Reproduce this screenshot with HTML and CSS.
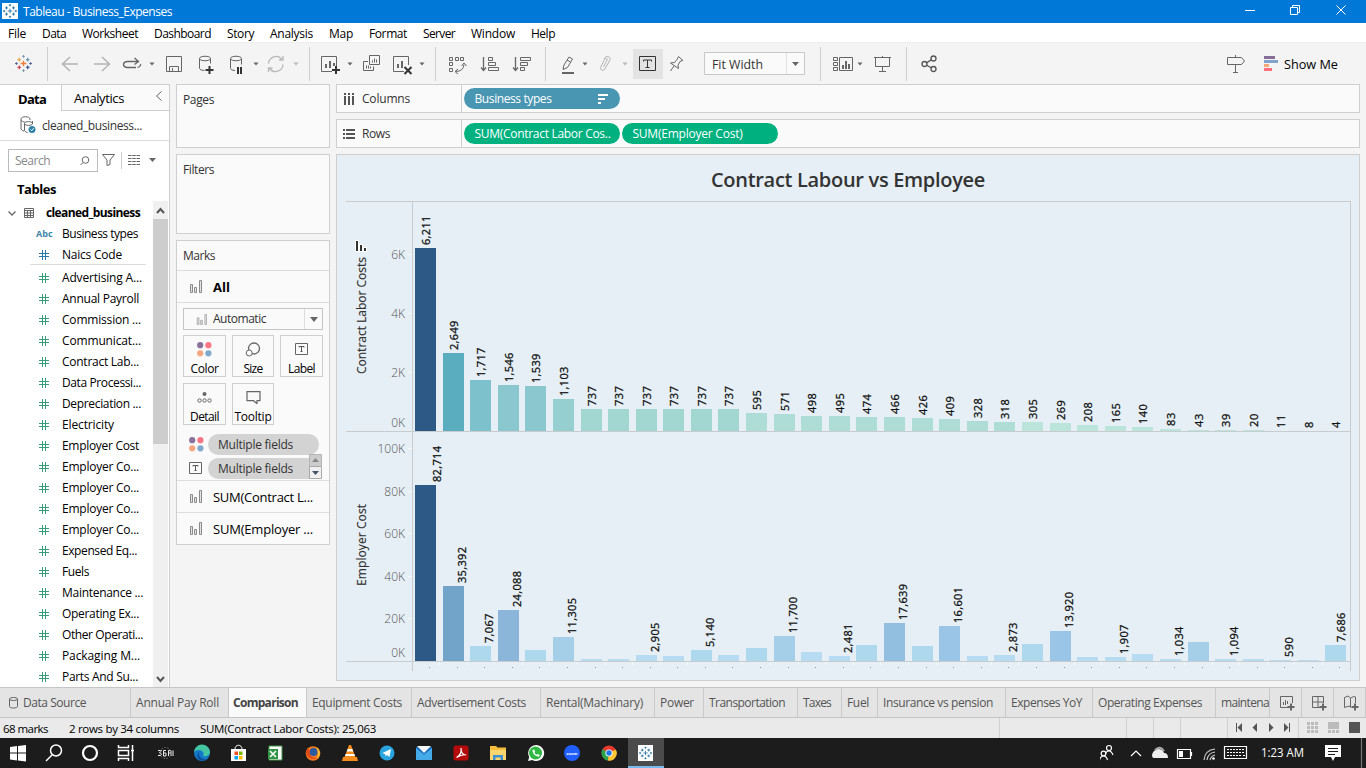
FILE: index.html
```html
<!DOCTYPE html>
<html lang="en">
<head>
<meta charset="utf-8">
<title>Tableau - Business_Expenses</title>
<link rel="stylesheet" href="styles.css">
</head>
<body>
<svg class="defs" width="0" height="0">
  <defs>
    <symbol id="tab-logo" viewBox="0 0 18 18">
      <path d="M9 6v6M6 9h6" stroke="#eb7b35" stroke-width="1.4"/>
      <path d="M4.500 3v4M2.500 5h4" stroke="#e0a33a" stroke-width="1.200"/>
      <path d="M13.500 3v4M11.500 5h4" stroke="#5b8fa8" stroke-width="1.200"/>
      <path d="M4.500 11v4M2.500 13h4" stroke="#c5323f" stroke-width="1.200"/>
      <path d="M13.500 11v4M11.500 13h4" stroke="#2f4f8f" stroke-width="1.200"/>
      <path d="M9 0v3M7.500 1.500h3M9 15v3M7.500 16.500h3" stroke="#7699a6" stroke-width="1"/>
      <path d="M1.500 7.500v3M0 9h3M16.500 7.500v3M15 9h3" stroke="#50609a" stroke-width="1"/>
    </symbol>
    <symbol id="tab-mono" viewBox="0 0 18 18">
      <path d="M9 6v6M6 9h6M4.500 3v4M2.500 5h4M13.500 3v4M11.500 5h4M4.500 11v4M2.500 13h4M13.500 11v4M11.500 13h4M9 0v3M7.500 1.500h3M9 15v3M7.500 16.500h3M1.500 7.500v3M0 9h3M16.500 7.500v3M15 9h3" stroke="#2d76a8" stroke-width="1.200"/>
    </symbol>
    <symbol id="bars" viewBox="0 0 13 13">
      <path d="M1.500 4.500h2v8h-2zM5.500 7.500h2v5h-2zM10.500.5h2v12h-2z" fill="#e4e4e4" stroke="#8a8a8a"/>
    </symbol>
    <symbol id="dots4" viewBox="0 0 15 15">
      <circle cx="3.200" cy="3.200" r="3.100" fill="#8a7199"/><circle cx="11.400" cy="3.200" r="3.100" fill="#fb7585"/>
      <circle cx="3.200" cy="11.300" r="3.100" fill="#f5a67f"/><circle cx="11.400" cy="11.300" r="3.100" fill="#80a8cc"/>
    </symbol>
    <symbol id="hash" viewBox="0 0 10 10">
      <path d="M3.500 0v10M6.500 0v10M0 3.500h10M0 6.500h10" fill="none" stroke="currentColor"/>
    </symbol>
    <symbol id="tbox" viewBox="0 0 13 12">
      <path d="M.5.5h12v11H.5z" fill="none" stroke="#666"/>
      <path d="M4 4.500v-1h5v1M6.500 3.500v5M5.500 8.500h2" fill="none" stroke="#555"/>
    </symbol>
  </defs>
</svg>

<header class="titlebar">
  <span class="app-ico"><svg width="14" height="14"><use href="#tab-mono"/></svg></span>
  <span class="app-title" data-w="149">Tableau - Business_Expenses</span>
  <svg class="win-btns" width="136" height="23" viewBox="1230 0 136 23" fill="none" stroke="#fff">
    <path d="M1245 10.500h10M1290.500 7.500h7v7h-7zM1292.500 7.500v-2h7v7h-2M1336.500 5.500l9 9M1345.500 5.500l-9 9"/>
  </svg>
</header>

<nav class="menubar">
  <span data-w="18">File</span><span data-w="24">Data</span><span data-w="56">Worksheet</span><span data-w="57">Dashboard</span><span data-w="27">Story</span><span data-w="43">Analysis</span><span data-w="24">Map</span><span data-w="38">Format</span><span data-w="32">Server</span><span data-w="44">Window</span><span data-w="24">Help</span>
</nav>

<section class="toolbar">
  <svg width="48" height="41" viewBox="0 43 48 41" class="grp"><use href="#tab-logo" x="15" y="55" width="17" height="17"/></svg>
  <svg width="262" height="41" viewBox="48 43 262 41" class="grp ln">
    <path d="M78 64H63M70 57l-7.500 7 7.500 7M94 64h15M102 57l7.500 7-7.500 7" stroke="#b4b4b4" stroke-width="1.500"/>
    <path d="M136 67.500h-9q-3.500-.5-3.500-3t3.500-3h12M134.500 58l4 3.500-4 3M137.500 67.500q3.500-1 3-3.500" stroke-width="1.300"/>
    <path class="car" d="M149.500 62.500h5l-2.500 3zM253.500 62.500h5l-2.500 3z"/><path class="car dim" d="M293.500 62.500h5l-2.500 3z"/>
    <path d="M166.500 56.500h15v15h-15zM169.500 71v-4.500h9V71M172.500 68v3"/>
    <path d="M199.500 58.500v10q.5 2 5 2M210.500 58.500v5M199.500 58.500c0-3 11-3 11 0s-11 3-11 0"/>
    <path d="M209.500 66v8M205.500 70h8" stroke="#333" stroke-width="2"/>
    <path d="M230.500 58.500v10q.5 2 4.500 2M241.500 58.500v6M230.500 58.500c0-3 11-3 11 0s-11 3-11 0"/>
    <path d="M238 67v7M241 67v7" stroke="#333" stroke-width="2"/>
    <path d="M268.500 63.500a7.500 7.500 0 0 1 13.500-4M283 64.500a7.500 7.500 0 0 1-13.500 4M283 56v4h-4M268.500 72v-4h4" stroke="#b8b8b8" stroke-width="1.300"/>
  </svg>
  <svg width="126" height="41" viewBox="310 43 126 41" class="grp ln">
    <path d="M332 71.500h-10.500v-15h15V67"/><path d="M326 68v-4M330 68v-7M334 66v-3" stroke-width="2"/>
    <path d="M336 66v8M332 70h8" stroke="#333" stroke-width="2"/>
    <path class="car" d="M347.500 62.500h5l-2.500 3zM419.500 62.500h5l-2.500 3z"/>
    <path d="M369.500 55.500h10v9h-10zM368 61.500h-4.500v9h10V66.500M372.500 62.500v-2M374.500 62.500v-4M376.500 62.500v-3M366.500 68.500v-3M368.500 68.500v-3M370.500 68.500v-2"/>
    <path d="M404 71.500h-10.500v-15h15V65"/><path d="M398 68v-4M402 68v-7" stroke-width="2"/>
    <path d="M404.500 67l7 7M411.500 67l-7 7" stroke="#333" stroke-width="2"/>
  </svg>
  <svg width="110" height="41" viewBox="436 43 110 41" class="grp ln">
    <path d="M449.500 57.500h3v3h-3zM455.500 57.500h3v3h-3zM460.500 57.500h3v3h-3zM449.500 62.500h3v3h-3zM449.500 68.500h3v3h-3zM455.500 71.500q8 0 8.500-7M458 69l-3 2.500 3 2.500M461.500 66l2.500-3 2.500 3"/>
    <path d="M483.500 57v13M481 67.500l2.500 3 2.500-3M515.500 57v13M513 67.500l2.500 3 2.500-3" stroke-width="1.300"/>
    <path d="M488.500 57.500h4v3h-4zM488.500 62.500h7v3h-7zM488.500 67.500h10v3h-10zM520.500 57.500h10v3h-10zM520.500 62.500h7v3h-7zM520.500 67.500h4v3h-4z"/>
  </svg>
  <svg width="275" height="41" viewBox="546 43 275 41" class="grp ln">
    <path d="M563 69.500l1-4.500 5-8 3.500 2-5 8.500zM567 60l3.500 2"/><path d="M562 73h12" stroke-width="2"/>
    <path class="car" d="M582.500 62.500h5l-2.500 3z"/><path class="car dim" d="M622.500 62.500h5l-2.500 3z"/>
    <path d="M603.500 67l4-8q-1-2-3 .5l-4 8q.5 4.500 4 2l5.500-9.500q.5-4-3.500-3.500-1.500.5-2.500 2.500" stroke="#b4b4b4"/>
    <path d="M633 49h30v30h-30z" fill="#e3e3e3" stroke="none"/><path d="M639.500 56.500h16v14h-16z" stroke="#333"/>
    <path d="M643.500 61.500v-1.500h8v1.500M647.500 60v7.500M645.500 67.500h4" stroke="#333"/>
    <path d="M678.500 56.500l4.500 4-2.500.5-2.500 4 .5 3.500-8-5.500 4-.5 2.500-3zM674 66l-3.500 5"/>
    <path d="M704.500 52.500h100v22h-100z" fill="#fafafa" stroke="#c8c8c8"/><path d="M786.500 53v21" stroke="#e0e0e0"/><path class="car" d="M792 62h7l-3.500 4z"/>
    <text x="712" y="69" class="tl" textLength="51" lengthAdjust="spacingAndGlyphs">Fit Width</text>
  </svg>
  <svg width="86" height="41" viewBox="821 43 86 41" class="grp ln">
    <path d="M833.500 57.500h4v3h-4zM833.500 62.500h4v3h-4zM833.500 67.500h4v3h-4zM839.500 57.500h13v13h-13z"/><path d="M843 69v-4M846 69v-8M849 69v-5" stroke-width="2"/>
    <path class="car" d="M857.500 62.500h5l-2.500 3z"/>
    <path d="M874 57.500h17M875.500 58v8.500h14V58M882.500 66.500v5M879 71.500h7M882.500 56v1.500"/>
  </svg>
  <svg width="459" height="41" viewBox="907 43 459 41" class="ln">
    <g stroke="#555" stroke-width="1.300"><circle cx="924.500" cy="64" r="2.500"/><circle cx="933.500" cy="58.500" r="2.500"/><circle cx="933.500" cy="69" r="2.500"/><path d="M926.700 62.700l4.500-2.800M926.700 65.300l4.500 2.500"/></g>
    <path d="M1227.500 57.500h14l3 3.500-3 3.500h-14zM1235.500 64.500v7.500M1233 72.500h5M1235.500 55v2.500"/>
    <g stroke="none"><path d="M1264 56h11v3h-11z" fill="#866e99"/><path d="M1264 60h14v3h-14z" fill="#7fa3cc"/><path d="M1264 64h5v3h-5z" fill="#f5a878"/><path d="M1264 68h8v3h-8z" fill="#fb6d7c"/></g>
    <text x="1284" y="69" class="tl dark" textLength="54" lengthAdjust="spacingAndGlyphs">Show Me</text>
  </svg>
</section>

<main class="work">
  <aside class="side">
    <div class="side-tabs">
      <div class="st on"><b data-w="28">Data</b></div>
      <div class="st"><span data-w="50">Analytics</span><svg width="8" height="12" class="ln"><path d="M6.500 1.500L1.500 6l5 4.500"/></svg></div>
    </div>
    <div class="source">
      <svg width="18" height="18" class="ln"><path d="M2 4v9q1 2 3 2M11 4V3C11 0 2 0 2 3s4 3 4 3M5.500 7.500v7q1 2 3 2M5.500 7.500c0-2.500 8-2.500 8 0s-8 2.500-8 0M13.500 5v3"/><circle cx="13" cy="13.500" r="3.500" fill="#2f83a9" stroke="none"/><path d="M11.500 13.500l1.200 1.200 2-2.400" stroke="#fff"/></svg>
      <span data-w="100">cleaned_business...</span>
    </div>
    <div class="search">
      <div class="box"><span data-w="35">Search</span><svg width="10" height="10" class="ln"><circle cx="5.500" cy="4" r="3.300"/><path d="M3 6.500L.5 9"/></svg></div>
      <svg width="56" height="20" viewBox="101 150 56 20" class="ln"><path d="M102.500 154.500h12l-4.500 5.500v4.500l-3 1V160z"/><path d="M121.500 152v17" stroke="#ccc"/><path d="M128 155.500h12M128 158.500h12M128 161.500h12M128 164.500h12" stroke-dasharray="3.500 .75"/><path class="car" d="M149 158h7l-3.500 4z"/></svg>
    </div>
    <div class="tables"><b data-w="39">Tables</b></div>
    <div class="list-wrap">
      <div class="list">
        <div class="f root"><svg width="27" height="10" viewBox="7 0 27 10" class="ln"><path d="M8.500 3.500l3.500 3.500 3.500-3.500" stroke-width="1.300"/><path d="M24.500.5h9v9h-9zM24.500 2.500h9M24.500 5h9M24.500 7.500h9M27.500 2v8M30.500 2v8"/></svg><b data-w="94">cleaned_business</b></div>
        <div class="f"><em>Abc</em><span data-w="76">Business types</span></div>
        <div class="f blue last"><svg><use href="#hash"/></svg><span data-w="60">Naics Code</span></div>
        <div class="f"><svg><use href="#hash"/></svg><span data-w="80">Advertising A...</span></div>
        <div class="f"><svg><use href="#hash"/></svg><span data-w="77">Annual Payroll</span></div>
        <div class="f"><svg><use href="#hash"/></svg><span data-w="79">Commission ...</span></div>
        <div class="f"><svg><use href="#hash"/></svg><span data-w="79">Communicat...</span></div>
        <div class="f"><svg><use href="#hash"/></svg><span data-w="77">Contract Lab...</span></div>
        <div class="f"><svg><use href="#hash"/></svg><span data-w="79">Data Processi...</span></div>
        <div class="f"><svg><use href="#hash"/></svg><span data-w="79">Depreciation ...</span></div>
        <div class="f"><svg><use href="#hash"/></svg><span data-w="52">Electricity</span></div>
        <div class="f"><svg><use href="#hash"/></svg><span data-w="77">Employer Cost</span></div>
        <div class="f"><svg><use href="#hash"/></svg><span data-w="77">Employer Co...</span></div>
        <div class="f"><svg><use href="#hash"/></svg><span data-w="77">Employer Co...</span></div>
        <div class="f"><svg><use href="#hash"/></svg><span data-w="77">Employer Co...</span></div>
        <div class="f"><svg><use href="#hash"/></svg><span data-w="77">Employer Co...</span></div>
        <div class="f"><svg><use href="#hash"/></svg><span data-w="75">Expensed Eq...</span></div>
        <div class="f"><svg><use href="#hash"/></svg><span data-w="27">Fuels</span></div>
        <div class="f"><svg><use href="#hash"/></svg><span data-w="81">Maintenance ...</span></div>
        <div class="f"><svg><use href="#hash"/></svg><span data-w="77">Operating Ex...</span></div>
        <div class="f"><svg><use href="#hash"/></svg><span data-w="81">Other Operati...</span></div>
        <div class="f"><svg><use href="#hash"/></svg><span data-w="78">Packaging M...</span></div>
        <div class="f"><svg><use href="#hash"/></svg><span data-w="76">Parts And Su...</span></div>
      </div>
      <div class="scroll">
        <svg width="15" height="17"><path d="M4 11l3.500-4 3.500 4"/></svg><div class="thumb"></div><svg width="15" height="17" class="dn"><path d="M4 7l3.500 4L11 7"/></svg>
      </div>
    </div>
  </aside>

  <section class="cards">
    <div class="card pages"><span data-w="31">Pages</span></div>
    <div class="card filters"><span data-w="31">Filters</span></div>
    <div class="card marks">
      <div class="mk-head"><span data-w="32">Marks</span></div>
      <div class="mk-row"><svg width="13" height="13"><use href="#bars"/></svg><b data-w="17">All</b></div>
      <div class="mk-body">
        <div class="sel"><svg width="11" height="11"><use href="#bars"/></svg><span data-w="53">Automatic</span><i><svg width="8" height="5"><path class="car" d="M0 0h8L4 5z"/></svg></i></div>
        <div class="btns">
          <div><svg width="15" height="15"><use href="#dots4"/></svg><span data-w="28">Color</span></div>
          <div><svg width="16" height="15" class="ln"><circle cx="9" cy="6.500" r="5.500" stroke-width="1.300"/><circle cx="4.200" cy="11" r="3" fill="#fafafa"/></svg><span data-w="19">Size</span></div>
          <div><svg width="13" height="13" viewBox="0 -1 13 13"><use href="#tbox" width="13" height="12"/></svg><span data-w="27">Label</span></div>
          <div><svg width="15" height="14" viewBox="0 -1 15 14" class="ln"><circle cx="7.500" cy="3" r="2" fill="#666" stroke="none"/><circle cx="2.500" cy="9.500" r="1.700"/><circle cx="7.500" cy="9.500" r="1.700"/><circle cx="12.500" cy="9.500" r="1.700"/></svg><span data-w="29">Detail</span></div>
          <div><svg width="15" height="14" viewBox="0 -1 15 14" class="ln"><path d="M1 .7h13v9h-3v3L7.500 9.700H1z" stroke-width="1.200"/></svg><span data-w="37">Tooltip</span></div>
        </div>
        <div class="mf"><svg width="15" height="15"><use href="#dots4"/></svg><p><span data-w="75">Multiple fields</span></p></div>
        <div class="mf"><svg width="15" height="12"><use href="#tbox" width="13" height="12"/></svg><p><span data-w="75">Multiple fields</span></p>
          <svg class="spin" width="13" height="25"><path d="M.5.5h12v12H.5z" fill="#ccc" stroke="#b5b5b5"/><path d="M.5 12.500h12v12H.5z" fill="#f0f0f0" stroke="#aaa"/><path d="M3 8l3.500-4L10 8z" fill="#888"/><path d="M3 17l3.500 4 3.500-4z" fill="#44546a"/></svg></div>
      </div>
      <div class="mk-row low"><svg width="13" height="13"><use href="#bars"/></svg><span data-w="100">SUM(Contract L...</span></div>
      <div class="mk-row low"><svg width="13" height="13"><use href="#bars"/></svg><span data-w="100">SUM(Employer ...</span></div>
    </div>
  </section>

  <section class="canvas">
    <div class="shelf"><div class="sh-lab"><svg width="12" height="12" class="solid"><path d="M1 0h2v2H1zM5 0h2v2H5zM9 0h2v2H9zM1 3h2v9H1zM5 3h2v9H5zM9 3h2v9H9z"/></svg><span data-w="48">Columns</span></div>
      <div class="pill dim"><span data-w="77">Business types</span><svg width="10" height="10"><path d="M0 1h10M0 5h7M0 9h3" stroke="#fff" stroke-width="2"/></svg></div></div>
    <div class="shelf"><div class="sh-lab"><svg width="12" height="12" class="solid"><path d="M0 1h2v2H0zM0 5h2v2H0zM0 9h2v2H0zM3 1h9v2H3zM3 5h9v2H3zM3 9h9v2H3z"/></svg><span data-w="28">Rows</span></div>
      <div class="pill"><span data-w="136">SUM(Contract Labor Cos..</span></div><div class="pill"><span data-w="110">SUM(Employer Cost)</span></div></div>
    <div class="viz">
      <h1><span data-w="274">Contract Labour vs Employee</span></h1>
      <svg id="chart" width="1022" height="480" viewBox="337 200 1022 480"></svg>
    </div>
  </section>
</main>

<nav class="sheets">
  <div class="ds"><svg width="9" height="12" class="ln"><path d="M.5 2v7.500c0 2 8 2 8 0V2M.5 2c0-2 8-2 8 0s-8 2-8 0"/></svg><span data-w="63">Data Source</span></div>
  <div><span data-w="83">Annual Pay Roll</span></div><div class="on"><b data-w="65">Comparison</b></div><div><span data-w="90">Equipment Costs</span></div><div><span data-w="109">Advertisement Costs</span></div><div><span data-w="97">Rental(Machinary)</span></div><div><span data-w="34">Power</span></div><div><span data-w="76">Transportation</span></div><div><span data-w="28">Taxes</span></div><div><span data-w="22">Fuel</span></div><div><span data-w="110">Insurance vs pension</span></div><div><span data-w="71">Expenses YoY</span></div><div><span data-w="104">Operating Expenses</span></div><div><span data-w="48">maintena</span></div>
  <div class="new"><svg width="16" height="16" class="ln"><path d="M9 12.500H1.500V1.500h12V8M4.500 10V7M6.500 10V5M8.500 9V6"/><path d="M12 8.500v7M8.500 12h7" stroke-width="2"/></svg></div>
  <div class="new"><svg width="16" height="16" class="ln"><path d="M9 12.500H1.500V1.500h11V8M1.500 7h11M7 1.500V12"/><path d="M12 8.500v7M8.500 12h7" stroke-width="2"/></svg></div>
  <div class="new"><svg width="16" height="16" class="ln"><path d="M8 12.500l-2-1.500-4.500 1.500v-10L5 1l2.500 2L11 1.500l1.500.5V8M7.500 3v9"/><path d="M12 8.500v7M8.500 12h7" stroke-width="2"/></svg></div>
</nav>

<footer class="status">
  <span data-w="45">68 marks</span><span data-w="110">2 rows by 34 columns</span><span data-w="176">SUM(Contract Labor Costs): 25,063</span>
  <svg width="368" height="20" viewBox="998 718 368 20" class="solid">
    <path d="M999 718h1v20h-1zM1126 718h1v20h-1zM1153 718h1v20h-1zM1180 718h1v20h-1zM1227 718h1v20h-1zM1298 718h1v20h-1z" fill="#d0d0d0"/>
    <path d="M1236 723h1v9h-1zM1242 723v9l-4.500-4.500zM1257 723v9l-4.500-4.500zM1269 723v9l4.500-4.500zM1284 723v9l4.500-4.500zM1289 723h1v9h-1z"/>
    <path d="M1307 722h3v3h-3zM1311 722h3v3h-3zM1315 722h3v3h-3zM1307 726h3v3h-3zM1311 726h3v3h-3zM1315 726h3v3h-3zM1307 730h3v3h-3zM1311 730h3v3h-3zM1315 730h3v3h-3zM1328 722h11v7h-11zM1328 730h3v3h-3zM1332 730h3v3h-3zM1336 730h3v3h-3z" fill="#bbb"/>
    <path d="M1349 722h11v11h-11z"/>
  </svg>
</footer>

<footer class="taskbar">
  <svg width="1100" height="30" viewBox="0 738 1100 30">
    <path d="M628 738h36v30h-36z" fill="#4b4b4b"/><path d="M628 766h36v2h-36z" fill="#76b9ed"/>
    <path d="M10 747l7-1v6.500h-7zM18 746l8-1v7.500h-8zM10 753.500h7v7l-7-1zM18 753.500h8v8l-8-1z" fill="#fff"/>
    <g fill="none" stroke="#fff" stroke-width="1.500"><circle cx="56" cy="750.500" r="5.500"/><path d="M52 755l-6 6"/><circle cx="90" cy="753" r="7" stroke-width="2.200"/>
    <path d="M118.500 745v2.500h10V745M118.500 761v-2.500h10v2.500M118.500 750.500h10v5h-10zM132.500 745v16M131 750.500h3"/></g>
    <path d="M158 750.500h3.500l-2 2.500q2 0 2 1.500t-3.500 1M166 750.500h-2.500v5.500h2.500v-3h-2.500M168.500 756v-5.500h2.500v5.500M168.500 753h2.500M173 750.500v5.500" fill="none" stroke="#eee"/><circle cx="165.500" cy="753" r="5.500" fill="none" stroke="#777" stroke-dasharray="1.500 1.500"/>
    <circle cx="202" cy="753" r="8" fill="#1478c8"/><path d="M194 753a8 8 0 0 1 16-1c0 4-5 5-7 4 2-3-1-6-4-6s-5 1-5 3z" fill="#43c5a2"/><path d="M199 752c-1 5 3 8 8 7-6 4-13-1-8-7z" fill="#0b4f9b"/>
    <path d="M231 749h15v12h-15z" fill="#fff"/><path d="M235 749c0-5 7-5 7 0" fill="none" stroke="#fff"/><path d="M234.500 751.500h3.500v3.500h-3.500z" fill="#f05021"/><path d="M239 751.500h3.500v3.500H239z" fill="#7eb900"/><path d="M234.500 756h3.500v3.500h-3.500z" fill="#00a3ee"/><path d="M239 756h3.500v3.500H239z" fill="#ffb800"/>
    <path d="M269 746h13v14h-13z" fill="#fff" stroke="#409445"/><path d="M268 749h10v10h-10z" fill="#2f9444"/><path d="M270 751l6 6M276 751l-6 6" stroke="#fff" stroke-width="1.600"/>
    <circle cx="313" cy="753.500" r="7.300" fill="#f47b20"/><circle cx="313.500" cy="752" r="4" fill="#2c5a9e"/><path d="M306 751c0 8 8 9 11 7-7 0-8-4-7-7l-2-3z" fill="#e04a1a"/><path d="M316 747c5 3 5 9 1 12 2-5 1-8-1-12z" fill="#ffc42e"/>
    <path d="M349 745h2l4.500 12h-11zM343 757h14l1 4h-16z" fill="#f48b1b"/><path d="M347.700 749h4.600l1 2.500h-6.600zM345.800 754h8.400l.8 2h-10z" fill="#fff"/>
    <circle cx="387" cy="753" r="7.500" fill="#29a4de"/><path d="M382.500 753l8.500-4-1.500 8-2.500-2-1.500 1.500v-2z" fill="#fff"/>
    <path d="M416 747h16v13h-16z" fill="#1668b8"/><path d="M417 746h14l-7 7z" fill="#f4f8fb"/><path d="M416 748l8 6.500 8-6.500v12h-16z" fill="#45abe8"/>
    <rect x="453.500" y="745.500" width="15" height="15" rx="2.500" fill="#b30b0b"/><path d="M456.500 757.500c4-2 5-6 4.500-9.500 0 5 2 7 5 7-3-1-7 1-9.500 2.500z" fill="none" stroke="#fff" stroke-width="1.200"/>
    <path d="M490 746h6l1.500 1.500H506V760h-16z" fill="#f5bd3c"/><path d="M490 750h16v10h-16z" fill="#fbd66e"/><path d="M493 760v-5h10v5h-2.500v-2.500h-5v2.500z" fill="#3f92d2"/>
    <path d="M528 761l1.200-4a8 8 0 1 1 3 3z" fill="#fff"/><circle cx="535.500" cy="753" r="6.500" fill="#2fb944"/><path d="M532.500 750c0 4 3 6.500 6.500 6.500l.8-1.500-2-1-1 .7q-1.500-.6-2.300-2l.5-1.200-.8-2z" fill="#fff"/>
    <circle cx="572" cy="753" r="8" fill="#1f5fff"/><text x="572" y="755" text-anchor="middle" class="zm">zoom</text>
    <circle cx="609" cy="753" r="7.500" fill="#e33b2e"/><path d="M609 753l-6.500-3.700a7.500 7.500 0 0 0 5.500 11.200z" fill="#2ba24c"/><path d="M609 753l6.800-3.500A7.500 7.500 0 0 1 608 760.500z" fill="#fcc934"/><circle cx="609" cy="753" r="3.600" fill="#fff"/><circle cx="609" cy="753" r="2.700" fill="#1b73e8"/>
    <path d="M638 745h15v16h-15z" fill="#fff"/><use href="#tab-mono" x="639" y="746.500" width="13" height="13"/>
  </svg>
  <svg width="266" height="30" viewBox="1100 738 266 30" fill="none" stroke="#fff" stroke-width="1.200">
    <circle cx="1103.500" cy="753.500" r="2.300"/><path d="M1099.500 760q1-4 4-4t4 4"/><circle cx="1109" cy="748" r="2.500"/><path d="M1105.500 753.500q1-2.500 3.500-2.500t4 4"/>
    <path d="M1131 756l5-5 5 5"/>
    <path d="M1152 755q1-5 6-6 5 0 6 4 4 0 4 5h-14q-2 0-2-3z" fill="#eee" stroke="none"/><path d="M1155 750q5-5 9 1" stroke="#aaa" stroke-width="2"/>
    <path d="M1177.500 749.500h13v9h-13zM1191.500 752v4"/><path d="M1179 751h4v6h-4z" fill="#fff" stroke="none"/>
    <path d="M1204 760q1-10 11-11M1207 760q1-7 8-8M1210 760q1-4 5-5" stroke="#ccc"/><circle cx="1213.500" cy="758.500" r="1.300" fill="#fff" stroke="none"/>
    <path d="M1224.500 746.500h22v12h-22z"/><path d="M1227 749.500h18M1227 752.500h18M1227 755.500h2M1230 755.500h11M1243 755.500h2" stroke-dasharray="2 1"/>
    <path d="M1325 745h16v12h-6l-2 4-2-4h-6z" fill="#fff" stroke="none"/><path d="M1328 748.500h10M1328 751.500h10M1328 754.500h7" stroke="#1c1c1c"/>
    <path d="M1361.500 738v30" stroke="#777"/>
    <text x="1261" y="757" class="clock" textLength="43" lengthAdjust="spacingAndGlyphs">1:23 AM</text>
  </svg>
</footer>
<script src="chart.js"></script>
</body>
</html>
```
FILE: styles.css
```css
* { box-sizing: border-box; }
body { margin: 0; width: 1366px; height: 768px; overflow: hidden; display: flex; flex-direction: column; font: 12px/16px "Open Sans", "Noto Sans", sans-serif; color: #000; background: #f4f4f4; }
svg { display: block; flex: none; }
.defs { height: 0; position: absolute; }
span, b { white-space: nowrap; }
[data-w] { display: inline-block; }
.ln { fill: none; stroke: #666; }
.solid { fill: #555; }
.car { fill: #666; stroke: none; }
.car.dim { fill: #b8b8b8; }
.tl { font-size: 13px; fill: #333; stroke: none; }
.tl.dark { fill: #000; }

.titlebar { height: 23px; background: #0078d7; color: #fff; display: flex; align-items: center; padding-left: 2px; }
.app-ico { width: 16px; height: 16px; background: #fff; display: grid; place-items: center; margin: -1px 5px 0 0; }
.app-title { margin-top: 1px; }
.win-btns { margin-left: auto; }
.menubar { height: 20px; background: #fff; display: grid; padding-left: 8px; grid-template-columns: 34px 40px 72px 73px 43px 59px 40px 54px 48px 60px 60px; align-items: center; border-bottom: 1px solid #eee; }
.menubar span { justify-self: start; margin-top: 2px; }
.toolbar { height: 41px; display: flex; }
.toolbar .grp { background: linear-gradient(#cfcfcf, #cfcfcf) right 4px / 1px 34px no-repeat; }

.work { height: 603px; display: flex; }
.side { width: 170px; border: 1px solid #cfcfcf; border-left: 0; border-bottom: 0; background: #fff; display: flex; flex-direction: column; }
.side-tabs { height: 26px; display: flex; }
.st { background: #fafafa; flex: 1; display: flex; align-items: center; justify-content: space-between; padding: 1px 6px 0 12px; border: solid #cfcfcf; border-width: 0 0 1px 1px; font-size: 13px; }
.st.on { flex: 0 0 61px; background: #fff; border: 0; padding-left: 18px; }
.st svg { margin-top: -4px; }
.source { height: 30px; border-bottom: 1px solid #ddd; display: flex; align-items: center; padding: 1px 0 0 19px; gap: 5px; color: #333; }
.source svg { margin-top: -2px; }
.search { display: flex; padding: 8px 0 0 8px; gap: 3px; height: 37px; }
.search > svg { margin-top: 1px; }
.box { width: 90px; height: 23px; border: 1px solid #bbb; display: flex; align-items: center; justify-content: space-between; padding: 1px 7px 0 6px; color: #8a8a8a; }
.tables { height: 23px; padding: 3px 0 0 17px; font-size: 13px; }
.list-wrap { flex: 1; display: flex; min-height: 0; }
.list { width: 153px; overflow: hidden; padding-top: 1px; }
.f { height: 21px; display: flex; align-items: center; padding-left: 39px; gap: 13px; color: #000; }
.f > svg { width: 10px; height: 10px; color: #3a9b7a; }
.f.blue > svg { color: #2b77a6; }
.f em { font: bold 9px "Open Sans", sans-serif; color: #3d86a8; width: 18px; margin: 0 -5px 0 -3px; }
.f.root { padding-left: 7px; gap: 12px; }
.f.root svg { width: 27px; }
.f.last { margin-bottom: 2px; background: linear-gradient(#ddd, #ddd) 30px bottom / 116px 1px no-repeat; }
.scroll { width: 15px; background: #f0f0f0; display: flex; flex-direction: column; padding-top: 1px; }
.scroll svg { fill: none; stroke: #555; stroke-width: 2; }
.thumb { height: 225px; background: #cdcdcd; }
.dn { margin-top: auto; }

.cards { width: 154px; margin-left: 6px; display: flex; flex-direction: column; color: #333; }
.card { background: #fafafa; border: 1px solid #cfcfcf; }
.pages { height: 64px; padding: 7px 6px; margin-bottom: 6px; }
.filters { height: 80px; padding: 7px 6px; margin-bottom: 6px; }
.marks { height: 305px; }
.mk-head { height: 30px; padding: 7px 6px; border-bottom: 1px solid #ddd; }
.mk-row { height: 32px; padding: 0 0 0 12px; display: flex; align-items: center; gap: 11px; border-bottom: 1px solid #ddd; font-size: 13px; color: #000; }
.mk-row.low { border: 0; border-top: 1px solid #ddd; }
.mk-body { height: 177px; padding: 5px 6px 0; }
.sel { height: 22px; border: 1px solid #c5c5c5; display: flex; align-items: center; padding-left: 12px; gap: 6px; }
.sel > svg { opacity: .75; }
.sel i { width: 18px; height: 20px; margin-left: auto; border-left: 1px solid #ddd; display: grid; place-items: center; }
.btns { display: grid; grid-template-columns: 43px 42px 43px; gap: 6px; margin-top: 5px; }
.btns div { height: 42px; border: 1px solid #cfcfcf; display: flex; flex-direction: column; align-items: center; justify-content: space-between; padding: 6px 0 0; color: #000; }
.btns span { margin-bottom: -1px; }
.mf { height: 24px; display: flex; align-items: center; gap: 4px; padding-left: 6px; position: relative; }
.btns + .mf { margin-top: 7px; }
.mf p { margin: 0; width: 111px; height: 21px; border-radius: 11px; background: #d3d3d3; padding: 3px 0 0 10px; }
.mf .spin { position: absolute; right: 1px; top: -2px; }

.canvas { width: 1024px; margin-left: 6px; }
.shelf { height: 29px; border: 1px solid #cfcfcf; background: #fafafa; margin-bottom: 6px; display: flex; gap: 2px; align-items: center; }
.sh-lab { width: 125px; height: 27px; border-right: 1px solid #cfcfcf; display: flex; align-items: center; gap: 7px; padding-left: 6px; color: #333; }
.pill { width: 156px; height: 21px; border-radius: 11px; background: #00b180; color: #fff; padding: 0 12px 0 10.500px; display: flex; align-items: center; justify-content: space-between; }
.pill.dim { background: #4996b2; }
.viz { height: 527px; background: #e6eff5; border: 1px solid #cfcfcf; text-align: center; }
h1 { font: 600 20px/28px "Open Sans", "Noto Sans", sans-serif; color: #333; margin: 11px 0 6px; white-space: nowrap; height: 28px; }
#chart { font: 11px "Open Sans", sans-serif; text-align: left; }
.rule { stroke: #c9cccf; fill: none; }
.tick { stroke: #f7fafc; fill: none; }
.dot { fill: #8d949a; }
.ax { font-size: 12px; font-weight: 300; fill: #555; text-anchor: end; }
.val { fill: #111; stroke: #111; stroke-width: .3; }
.axt { font-size: 12px; fill: #333; stroke: #333; stroke-width: .15; text-anchor: middle; }
.halo { stroke: #fff; fill: #333; stroke-width: 2; paint-order: stroke; }

.sheets { height: 31px; border: solid #c5c5c5; border-width: 1px 0; background: #e4e4e4; color: #555; display: grid; grid-template-columns: 131px 98px 78px 105px 129px 114px 49px 94px 44px 36px 128px 87px 123px 54px 32px 32px 32px; }
.sheets div { border-right: 1px solid #c9c9c9; padding-left: 5px; display: flex; align-items: center; }
.sheets .on { background: #fafafa; padding-left: 4px; color: #444; }
.sheets .ds { padding-left: 9px; gap: 5px; }
.sheets .new { padding-left: 9px; }
.status { height: 20px; background: #eaeaea; display: flex; align-items: center; padding-left: 3px; font-size: 11.500px; }
.status span { margin: 2px 21px 0 0; }
.status svg { margin-left: auto; }
.taskbar { height: 30px; background: #1c1c1c; display: flex; }
.zm { font: bold 4px "Open Sans", sans-serif; fill: #fff; }
.clock { font-size: 12px; fill: #fff; stroke: none; }
```
FILE: chart.js
```js
// Spread each label's letters to its declared width.
document.querySelectorAll('[data-w]').forEach(el => {
  const natural = el.getBoundingClientRect().width;
  el.style.letterSpacing = ((+el.dataset.w - natural) / el.textContent.length).toFixed(3) + 'px';
});

const X0 = 415, STEP = 27.59, BAR = 21;
const labor = [6211, 2649, 1717, 1546, 1539, 1103, 737, 737, 737, 737, 737, 737, 595, 571, 498, 495, 474, 466, 426, 409, 328, 318, 305, 269, 208, 165, 140, 83, 43, 39, 20, 11, 8, 4];
// Heights in pixels, one per business type.
const employer = [176, 75, 15, 51, 11, 24, 2, 2, 6, 5, 11, 6, 13, 25, 9, 5, 16, 38, 15, 35, 5, 6, 17, 30, 4, 4, 7, 2, 19, 2, 2, 1, 1, 16];
const employerText = {0: '82,714', 1: '35,392', 2: '7,067', 3: '24,088', 5: '11,305', 8: '2,905', 10: '5,140', 13: '11,700', 15: '2,481', 17: '17,639', 19: '16,601', 21: '2,873', 23: '13,920', 25: '1,907', 27: '1,034', 29: '1,094', 31: '590', 33: '7,686'};

const laborColor = v => v > 6000 ? '#2c5985' : v > 2000 ? '#5aacbf' : v > 1600 ? '#7dc1cc' : v > 1200 ? '#8bc7cf' : v > 1000 ? '#95cfd0' : v > 700 ? '#a1d6d1' : v > 310 ? '#aedcd6' : '#bbe5da';
const employerColor = h => h > 100 ? '#2c5985' : h > 60 ? '#72a3c9' : h > 45 ? '#8bb6da' : h > 36 ? '#92bfdf' : h > 28 ? '#9bc5e6' : h > 18 ? '#a5cee9' : h > 9 ? '#aed8ee' : '#b7dcf2';
const rect = (x, y, h, c) => `<rect x="${x}" y="${y}" width="${BAR}" height="${h}" fill="${c}"/>`;
const label = (x, y, t) => {
  const len = t.replace(',', '').length * 6.6 + (t.includes(',') ? 3 : 0);
  return `<text class="val" transform="translate(${x} ${y}) rotate(-90)" textLength="${len}">${t}</text>`;
};

let s = '';
labor.forEach((v, i) => {
  const x = Math.round(X0 + STEP * i), top = 431 - Math.round(v * 0.02946);
  s += rect(x, top, 431 - top, laborColor(v)) + label(x + 15, top - 3, v.toLocaleString('en-US'));
  const h = employer[i];
  s += rect(x, 661 - h, h, employerColor(h));
  if (employerText[i]) s += label(x + (i === 0 ? 26 : i === 33 ? 20 : 23), 661 - h - 3, employerText[i]);
  s += `<path class="dot" d="M${x + 14} 667h1v1h-1z"/>`;
  if (i < 33) s += `<path class="tick" d="M${Math.round(x + 24)}.500 662v3"/>`;
});
const axis = (t, y, tick) => {
  s += `<text class="ax" x="405" y="${y + 5}">${t}</text>`;
  if (tick) s += `<path class="tick" d="M408 ${y}.500h4"/>`;
};
axis('6K', 254, 1); axis('4K', 313, 1); axis('2K', 372, 1); axis('0K', 422, 0);
axis('100K', 448, 1); axis('80K', 491, 1); axis('60K', 533, 1); axis('40K', 576, 1); axis('20K', 618, 1); axis('0K', 652, 0);
s += '<path class="rule" d="M346 201.500h1005M346 431.500h1005M346 661.500h1005M412.500 201v470M1350.500 201v470"/>';
s += '<text class="axt" transform="translate(366 315.500) rotate(-90)" textLength="117">Contract Labor Costs</text>';
s += '<text class="axt" transform="translate(366 545) rotate(-90)" textLength="82">Employer Cost</text>';
s += '<path class="halo" d="M356 241h2v10h-2zM360 245h2v6h-2zM364 248h2v3h-2z"/>';
document.getElementById('chart').innerHTML = s;
```
